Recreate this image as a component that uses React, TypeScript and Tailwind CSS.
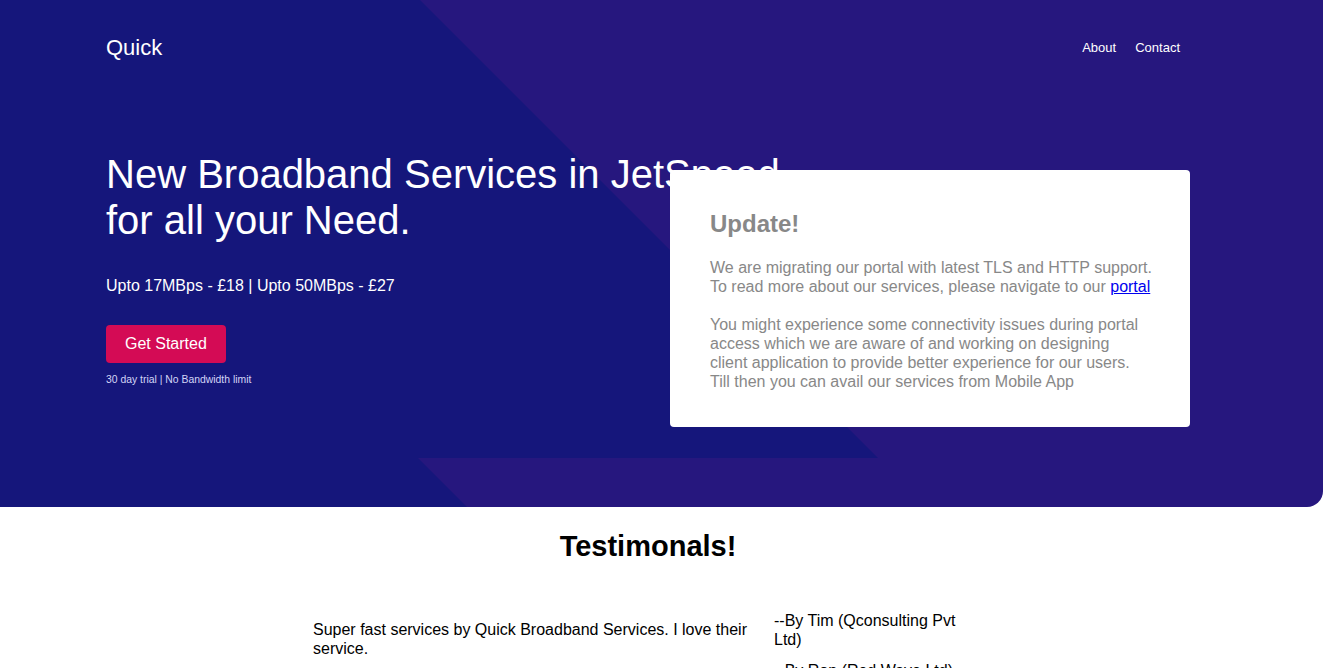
export default function App() {
  const authors = ['--By Tim (Qconsulting Pvt Ltd)', '--By Ron (Red Wave Ltd)']

  return (
    <div className="min-h-screen bg-white font-['Liberation_Sans',Arial,sans-serif]">
      <section className="relative h-[507px] overflow-hidden rounded-br-2xl bg-[#26177e]">
        {/* darker diagonal backdrop */}
        <div className="absolute inset-0 bg-[#15167b] [clip-path:polygon(0_0,420px_0,878px_458px,418px_458px,467px_507px,0_507px)]" />

        <div className="relative ml-[106px] w-[1084px] text-white">
          <nav className="mt-[33px] flex h-[30px] items-center justify-between">
            <a href="#" className="text-[22px] leading-[30px]">
              Quick
            </a>
            <div className="mr-[10px] flex gap-[19px] text-[13px]">
              <a href="#">About</a>
              <a href="#">Contact</a>
            </div>
          </nav>

          <div className="mt-[88px] flex items-start">
            <div className="w-[564px] shrink-0">
              <h1 className="whitespace-nowrap text-[40px] leading-[46px] font-normal">
                New Broadband Services in JetSpeed
                <br />
                for all your Need.
              </h1>
              <p className="mt-[34px] text-[16px] leading-[18px]">
                Upto 17MBps - £18 | Upto 50MBps - £27
              </p>
              <button className="mt-[30px] h-[38px] rounded-[4px] bg-[#d40b55] px-[19px] text-[16px] text-white">
                Get Started
              </button>
              <p className="mt-[10px] text-[10.4px] leading-[13px] text-[#d3d5f6]">
                30 day trial | No Bandwidth limit
              </p>
            </div>

            <div className="relative z-10 mt-[19px] h-[257px] w-[520px] rounded-[4px] bg-white px-[40px] pt-[40px] text-[#888888]">
              <h2 className="text-[24px] leading-[28px] font-bold">Update!</h2>
              <p className="mt-[20px] whitespace-nowrap text-[16px] leading-[19px]">
                We are migrating our portal with latest TLS and HTTP support.
                <br />
                To read more about our services, please navigate to our{' '}
                <a href="#" className="text-[#0000ee] underline">
                  portal
                </a>
              </p>
              <p className="mt-[19px] whitespace-nowrap text-[16px] leading-[19px]">
                You might experience some connectivity issues during portal
                <br />
                access which we are aware of and working on designing
                <br />
                client application to provide better experience for our users.
                <br />
                Till then you can avail our services from Mobile App
              </p>
            </div>
          </div>
        </div>
      </section>

      <section className="ml-[106px] w-[1084px] text-black">
        <h2 className="mt-[23px] text-center text-[29px] leading-[33px] font-bold">Testimonals!</h2>
        <div className="mx-auto mt-[48px] flex w-[670px] gap-[14px] text-[16px] leading-[19px]">
          <p className="w-[447px] pt-[9px]">
            Super fast services by Quick Broadband Services. I love their service.
          </p>
          <div className="flex w-[209px] flex-col gap-[12px]">
            {authors.map((a) => (
              <p key={a} className="w-[200px]">
                {a}
              </p>
            ))}
          </div>
        </div>
      </section>
    </div>
  )
}
